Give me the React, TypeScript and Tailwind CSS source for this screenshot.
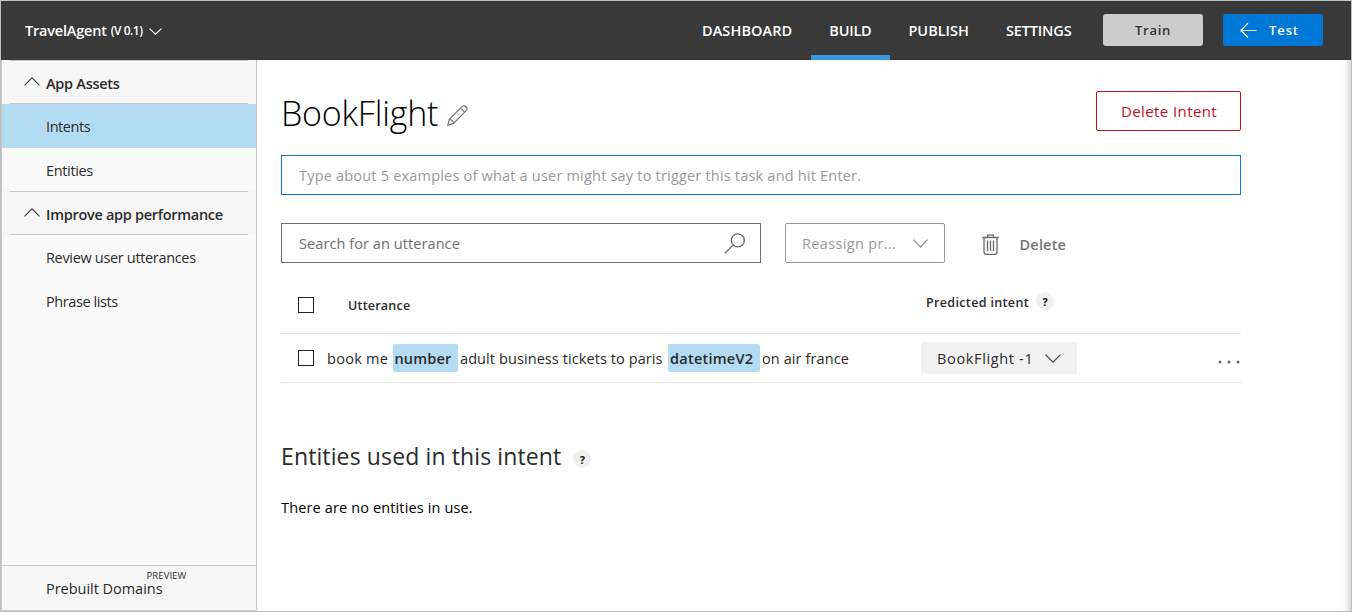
import React from 'react';

const Chevron = ({ up, w, h, color, className = '' }: { up?: boolean; w: number; h: number; color: string; className?: string }) => (
  <svg width={w} height={h} viewBox={`0 0 ${w} ${h}`} fill="none" stroke={color} strokeWidth="1.2" className={`shrink-0 ${className}`}>
    <path d={up ? `M0.5 ${h - 0.6}L${w / 2} 0.9L${w - 0.5} ${h - 0.6}` : `M0.5 0.6L${w / 2} ${h - 0.9}L${w - 0.5} 0.6`} />
  </svg>
);

const Help = ({ className = '' }: { className?: string }) => (
  <span className={`flex size-[18px] shrink-0 items-center justify-center rounded-full bg-[#f0f0f0] pt-px text-[11px] leading-none font-bold text-[#111] ${className}`}>?</span>
);

const NavItem = ({ label, spacing, active }: { label: string; spacing: string; active?: boolean }) => (
  <a className={`relative flex h-full items-center px-[18.5px] ${spacing}`}>
    {label}
    {active && <span className="absolute inset-x-0 bottom-0 h-[5px] bg-[#3a96dd]" />}
  </a>
);

const SectionHead = ({ label, spacing }: { label: string; spacing: string }) => (
  <div className="h-11 bg-[#f6f6f6] px-2">
    <div className={`flex h-full items-center border-y border-[#c8c8c8] pl-[14px] font-semibold ${spacing}`}>
      <Chevron up w={16} h={9} color="#444" className="mr-[6px] -mt-[2px]" />
      <span className="pt-[3px]">{label}</span>
    </div>
  </div>
);

const Checkbox = () => <span className="size-4 shrink-0 border border-[#222] bg-white" />;

export default function App() {
  return (
    <div className="flex h-[612px] w-[1352px] flex-col overflow-hidden border border-[#bfbfbf] border-t-[#c3c7c6] bg-white font-['Open_Sans',sans-serif] text-[14.5px] leading-5 text-[#2b2b2b]">
      <header className="flex h-[59px] shrink-0 items-center justify-between bg-[#393939] pr-[28px] pl-6 font-semibold text-white">
        <div className="flex items-center">
          <span className="tracking-[-0.2px]">TravelAgent</span>
          <span className="ml-[4px] text-[12px] tracking-[-0.5px]">(V 0.1)</span>
          <Chevron w={13} h={7} color="#fff" className="mt-[2px] ml-[7px]" />
        </div>
        <div className="flex h-full items-center">
          <nav className="flex h-full">
            <NavItem label="DASHBOARD" spacing="tracking-[0.1px]" />
            <NavItem label="BUILD" spacing="tracking-[-0.24px]" active />
            <NavItem label="PUBLISH" spacing="tracking-[0.02px]" />
            <NavItem label="SETTINGS" spacing="tracking-[-0.15px]" />
          </nav>
          <button className="-mt-px ml-[13px] flex h-8 w-[100px] items-center justify-center rounded-[3px] bg-[#ccc] text-[13px] tracking-[0.72px] text-[#333]">Train</button>
          <button className="-mt-px ml-5 flex h-8 w-[100px] items-center rounded-[3px] bg-[#0078d7] pl-[17px] text-[13px] tracking-[0.9px]">
            <svg width="17" height="16" viewBox="0 0 17 16" fill="none" stroke="#fff" strokeWidth="1.2" className="mr-[12px]">
              <path d="M16.5 8.5H1M8 1.2L0.9 8.5L8 15.5" />
            </svg>
            Test
          </button>
        </div>
      </header>

      <div className="flex min-h-0 flex-1">
        <aside className="flex w-[256px] shrink-0 flex-col border-r border-l border-[#c8c8c8] bg-[#fafafa]">
          <SectionHead label="App Assets" spacing="tracking-[-0.27px]" />
          <a className="flex h-11 items-center bg-[#b3dbf2] pt-[2px] pl-[44px] tracking-[-0.42px]">Intents</a>
          <a className="flex h-[43px] items-center pt-[2px] pl-[44px] tracking-[-0.35px]">Entities</a>
          <SectionHead label="Improve app performance" spacing="tracking-[-0.29px]" />
          <a className="flex h-11 items-center pt-[2px] pl-[44px] tracking-[-0.33px]">Review user utterances</a>
          <a className="flex h-11 items-center pt-[2px] pl-[44px] tracking-[-0.41px]">Phrase lists</a>
          <div className="relative mt-auto h-[46px] border-y border-[#c8c8c8] bg-[#f6f6f6] pt-[13px] pl-[44px] font-medium tracking-[-0.03px]">
            Prebuilt Domains
            <span className="absolute top-[4px] left-[144.5px] text-[9.5px] leading-[12px] font-normal tracking-[0.09px]">PREVIEW</span>
          </div>
        </aside>

        <main className="flex-1 pl-6 shadow-[inset_-6px_0_6px_-4px_rgba(0,0,0,0.22)]">
          <div className="w-[960px]">
            <div className="mt-[31px] flex h-10 items-center justify-between">
              <div className="flex items-center">
                <h1 className="pt-[4px] text-[34px] leading-10 font-light tracking-[-0.2px] text-black">BookFlight</h1>
                <svg width="21" height="21" viewBox="0 0 21 21" fill="none" stroke="#767676" strokeWidth="1.2" className="mt-[9px] ml-[9px]">
                  <path d="M0.8 20.2L2.3 14.4L15 1.7C16 0.7 17.6 0.6 18.8 1.7C20.1 2.9 20.3 4.5 19.3 5.6L6.5 18.4ZM2.3 14.4C4.3 14.6 6.1 16.4 6.5 18.4M13.6 3.1L17.9 7.2" />
                </svg>
              </div>
              <button className="flex h-10 w-[145px] items-center justify-center rounded-[2px] border border-[#c50f1f] pl-px text-[15px] font-medium tracking-[0.41px] text-[#c50f1f]">Delete Intent</button>
            </div>

            <div className="mt-6 flex h-10 items-center border border-[#0f78c8] pt-[2px] pl-[17px] tracking-[0.2px] text-[#999]">
              Type about 5 examples of what a user might say to trigger this task and hit Enter.
            </div>

            <div className="mt-7 flex h-10">
              <div className="flex w-[480px] items-center justify-between border border-[#6e6e6e] pr-[15px] pl-[17px] text-[#6e6e6e]">
                <span className="pt-[2px] tracking-[0.08px]">Search for an utterance</span>
                <svg width="21" height="21" viewBox="0 0 21 21" fill="none" stroke="#6e6e6e" strokeWidth="1.3">
                  <circle cx="13.8" cy="7.4" r="6.5" />
                  <path d="M9.1 12L0.8 20.2" />
                </svg>
              </div>
              <div className="ml-6 flex w-40 items-center rounded-[2px] border border-[#999] pr-4 pl-[16px] text-[#999]">
                <span className="pt-[2px] tracking-[0.34px]">Reassign pr...</span>
                <Chevron w={15} h={9} color="#8a8a8a" className="ml-auto" />
              </div>
              <div className="ml-[37px] flex items-center font-semibold text-[#767676]">
                <svg width="17" height="21" viewBox="0 0 17 21" fill="none" stroke="#6a6a6a" strokeWidth="1.3" className="mt-[2px]">
                  <path d="M0.3 3.5H16.7M5.5 3.2V1.2H11.5V3.2M2 3.5V17.5Q2 20.3 4 20.3H13Q15 20.3 15 17.5V3.5M5.5 6.5V17M8.5 6.5V17M11.5 6.5V17" />
                </svg>
                <span className="mt-[4px] ml-[20.5px] tracking-[0.2px]">Delete</span>
              </div>
            </div>

            <div className="flex h-[71px] items-start border-b border-[#e3e3e3] pl-[17px] text-[12.5px] font-semibold">
              <span className="mt-[34px] flex"><Checkbox /></span>
              <span className="mt-[33px] ml-[34px] w-[578px] tracking-[0.22px]">Utterance</span>
              <span className="mt-[30px] tracking-[0.35px]">Predicted intent</span>
              <Help className="mt-[29px] ml-[7px]" />
            </div>

            <div className="flex h-[49px] items-center border-b border-[#e3e3e3] pl-[17px]">
              <Checkbox />
              <div className="ml-[13px] flex w-[594px] items-center whitespace-nowrap">
                <span className="w-[66px] pt-[2px] tracking-[0.27px]">book me</span>
                <span className="flex h-7 w-[65px] items-center rounded-[2px] bg-[#b3dbf2] pt-[2px] pl-[1.5px] font-semibold tracking-[0.15px]">number</span>
                <span className="w-[210px] pt-[2px] pl-[2px] tracking-[0.09px]">adult business tickets to paris</span>
                <span className="flex h-7 w-[92px] items-center rounded-[2px] bg-[#b3dbf2] pt-[2px] pl-[2px] font-semibold tracking-[0.24px]">datetimeV2</span>
                <span className="pt-[2px] pl-[2px] tracking-[0.1px]">on air france</span>
              </div>
              <div className="flex h-8 w-[156px] items-center rounded-[2px] bg-[#f1f1f1] pr-4 pl-[16px] tracking-[0.65px]">
                <span className="pt-[2px]">BookFlight -1</span>
                <Chevron w={16} h={9} color="#444" className="ml-auto" />
              </div>
              <svg width="24" height="4" viewBox="0 0 24 4" fill="#666" className="mt-[7px] ml-auto">
                <circle cx="3" cy="2" r="1.5" /><circle cx="12" cy="2" r="1.5" /><circle cx="21" cy="2" r="1.5" />
              </svg>
            </div>

            <div className="mt-[58px] flex h-8 items-center">
              <h2 className="pb-[2px] text-[23px] leading-8 tracking-[0.12px]">Entities used in this intent</h2>
              <Help className="mt-[4px] ml-[12px]" />
            </div>
            <p className="mt-[25px] tracking-[0.14px] text-black">There are no entities in use.</p>
          </div>
        </main>
      </div>
    </div>
  );
}
